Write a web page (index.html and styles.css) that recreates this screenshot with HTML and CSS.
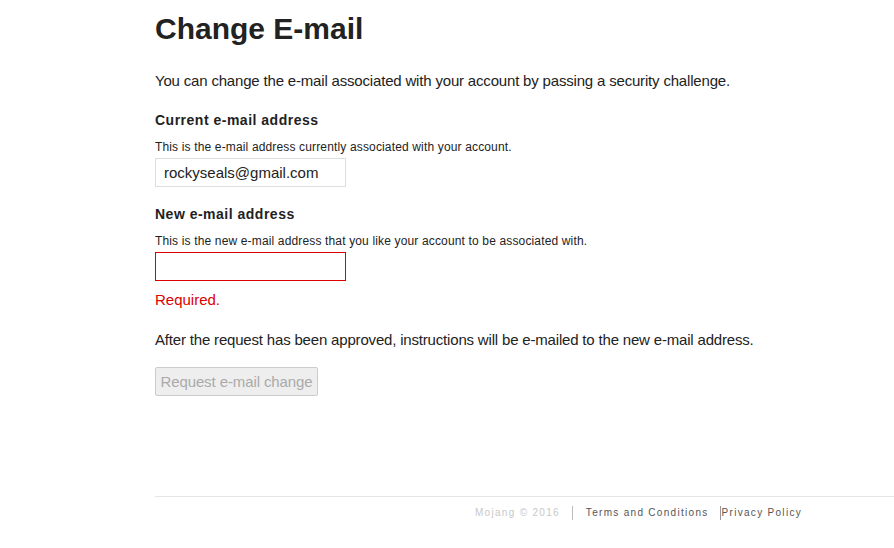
FILE: index.html
```html
<!DOCTYPE html>
<html>
<head>
<meta charset="utf-8">
<link rel="stylesheet" href="styles.css">
</head>
<body>
<div class="page">
  <main class="content">
    <h1 class="title">Change E-mail</h1>
    <p class="lead">You can change the e-mail associated with your account by passing a security challenge.</p>
    <div class="field">
      <h2 class="label">Current e-mail address</h2>
      <p class="help">This is the e-mail address currently associated with your account.</p>
      <div class="input">rockyseals@gmail.com</div>
    </div>
    <div class="field">
      <h2 class="label">New e-mail address</h2>
      <p class="help">This is the new e-mail address that you like your account to be associated with.</p>
      <div class="input input-error"></div>
      <p class="error">Required.</p>
    </div>
    <p class="lead note">After the request has been approved, instructions will be e-mailed to the new e-mail address.</p>
    <button class="btn" disabled>Request e-mail change</button>
  </main>
  <footer class="footer">
    <span class="copy">Mojang © 2016</span>
    <span class="sep"></span>
    <a class="link">Terms and Conditions</a>
    <span class="sep sep-tight"></span>
    <a class="link">Privacy Policy</a>
  </footer>
</div>
</body>
</html>
```
FILE: styles.css
```css
html, body {
  margin: 0;
  padding: 0;
  background: #fff;
}
body {
  font-family: "Liberation Sans", Arial, sans-serif;
  color: #222;
}
.page {
  margin-left: 155px;
}
.content {
  padding-top: 12px;
  min-height: 496px;
  box-sizing: border-box;
}
.title {
  margin: 0;
  font-size: 30px;
  line-height: 33px;
  font-weight: bold;
  color: #222;
}
.lead {
  margin: 27px 0 0;
  font-size: 15px;
  line-height: 18px;
  letter-spacing: -0.18px;
  color: #222;
}
.field {
  margin-top: 22px;
}
.field + .field {
  margin-top: 19px;
}
.label {
  margin: 0;
  font-size: 14px;
  line-height: 17px;
  font-weight: bold;
  letter-spacing: 0.5px;
  color: #222;
}
.help {
  margin: 11px 0 0;
  font-size: 12px;
  line-height: 14px;
  letter-spacing: 0.15px;
  color: #222;
}
.input {
  margin-top: 4px;
  width: 191px;
  height: 29px;
  box-sizing: border-box;
  border: 1px solid #ddd;
  padding: 0 8px;
  font-size: 15px;
  line-height: 27px;
  color: #222;
}
.input-error {
  border-color: #d00;
}
.error {
  margin: 10px 0 0;
  font-size: 15px;
  line-height: 18px;
  color: #d00;
}
.note {
  margin-top: 22px;
}
.btn {
  display: block;
  margin-top: 18px;
  width: 163px;
  height: 29px;
  padding: 0;
  border: 1px solid #ccc;
  border-radius: 2px;
  background: #eee;
  font-family: "Liberation Sans", Arial, sans-serif;
  font-size: 15px;
  letter-spacing: -0.1px;
  color: #aaa;
}
.footer {
  border-top: 1px solid #e5e5e5;
  padding: 9px 0 0 228px;
  display: flex;
  justify-content: center;
  align-items: center;
  font-size: 10px;
  letter-spacing: 1.3px;
  line-height: 14px;
}
.copy {
  color: #c8c8c8;
}
.sep {
  width: 1px;
  height: 14px;
  background: #bbb;
  margin: 0 13px 0 12px;
}
.sep-tight {
  margin: 0 1px 0 11px;
  background: #999;
}
.link {
  color: #555;
}
```
